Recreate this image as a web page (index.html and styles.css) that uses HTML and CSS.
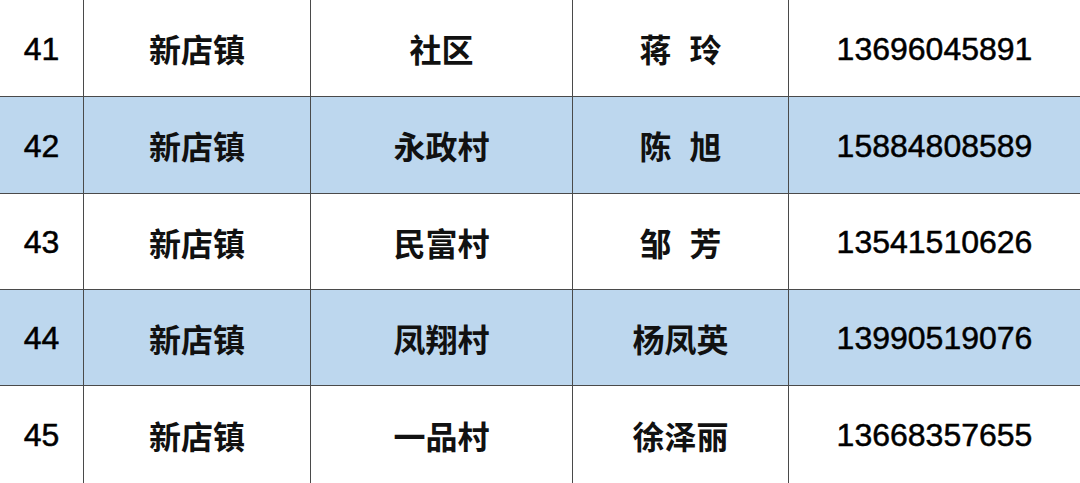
FILE: index.html
```html
<!DOCTYPE html>
<html lang="zh-CN">
<head>
<meta charset="utf-8">
<title>表格</title>
<link rel="stylesheet" href="styles.css">
</head>
<body>
<div class="table">
  <div class="row r1">
    <div class="cell c1 num">41</div>
    <div class="cell c2">新店镇</div>
    <div class="cell c3">社区</div>
    <div class="cell c4">蒋&nbsp;&nbsp;玲</div>
    <div class="cell c5 num">13696045891</div>
  </div>
  <div class="row r2 blue">
    <div class="cell c1 num">42</div>
    <div class="cell c2">新店镇</div>
    <div class="cell c3">永政村</div>
    <div class="cell c4">陈&nbsp;&nbsp;旭</div>
    <div class="cell c5 num">15884808589</div>
  </div>
  <div class="row r3">
    <div class="cell c1 num">43</div>
    <div class="cell c2">新店镇</div>
    <div class="cell c3">民富村</div>
    <div class="cell c4">邹&nbsp;&nbsp;芳</div>
    <div class="cell c5 num">13541510626</div>
  </div>
  <div class="row r4 blue">
    <div class="cell c1 num">44</div>
    <div class="cell c2">新店镇</div>
    <div class="cell c3">凤翔村</div>
    <div class="cell c4">杨凤英</div>
    <div class="cell c5 num">13990519076</div>
  </div>
  <div class="row r5">
    <div class="cell c1 num">45</div>
    <div class="cell c2">新店镇</div>
    <div class="cell c3">一品村</div>
    <div class="cell c4">徐泽丽</div>
    <div class="cell c5 num">13668357655</div>
  </div>
</div>
</body>
</html>
```

FILE: styles.css
```css
html, body {
  margin: 0;
  padding: 0;
  background: #ffffff;
}

.table {
  width: 1080px;
  display: flex;
  flex-direction: column;
}

.row {
  display: grid;
  grid-template-columns: 84px 227px 262px 216px 291px;
  box-sizing: border-box;
  border-bottom: 1px solid #4a4a4a;
}

.r1 { height: 97px; }
.r2 { height: 97px; }
.r3 { height: 96px; }
.r4 { height: 96px; }
.r5 { height: 98px; border-bottom-color: #8a8a8a; }

.blue {
  background: #bdd7ee;
}

.cell {
  box-sizing: border-box;
  border-right: 1px solid #4a4a4a;
  display: flex;
  align-items: center;
  justify-content: center;
  font-family: "Liberation Sans", "Noto Sans CJK SC", sans-serif;
  font-size: 32px;
  font-weight: 700;
  color: #111111;
  white-space: nowrap;
}

.c5 {
  border-right: none;
}

.num {
  font-weight: 400;
  color: #000000;
  padding-top: 2px;
  -webkit-text-stroke: 0.5px #000000;
}
```
